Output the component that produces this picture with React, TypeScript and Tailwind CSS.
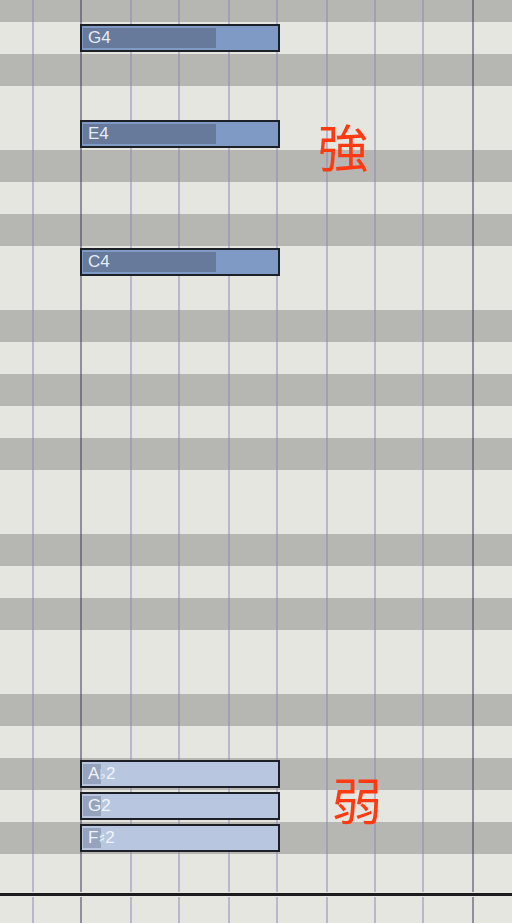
import React from 'react';

type Note = { label: string; accidental?: string; octave: string; strong: boolean };
type Row = { dark: boolean; h?: number; note?: Note };

// piano roll rows, top to bottom (first one is cut off by the viewport)
const rows: Row[] = [
  { dark: true, h: 22 },
  { dark: false, note: { label: 'G', octave: '4', strong: true } },
  { dark: true },
  { dark: false },
  { dark: false, note: { label: 'E', octave: '4', strong: true } },
  { dark: true },
  { dark: false },
  { dark: true },
  { dark: false, note: { label: 'C', octave: '4', strong: true } },
  { dark: false },
  { dark: true },
  { dark: false },
  { dark: true },
  { dark: false },
  { dark: true },
  { dark: false },
  { dark: false },
  { dark: true },
  { dark: false },
  { dark: true },
  { dark: false },
  { dark: false },
  { dark: true },
  { dark: false },
  { dark: true, note: { label: 'A', accidental: '♭', octave: '2', strong: false } },
  { dark: false, note: { label: 'G', octave: '2', strong: false } },
  { dark: true, note: { label: 'F', accidental: '♯', octave: '2', strong: false } },
  { dark: false },
];

// left edge of each beat line, bar lines are darker
const lines = [
  { x: 32, bar: false },
  { x: 80, bar: true },
  { x: 130, bar: false },
  { x: 178, bar: false },
  { x: 228, bar: false },
  { x: 276, bar: false },
  { x: 326, bar: false },
  { x: 374, bar: false },
  { x: 422, bar: false },
  { x: 472, bar: true },
];

const NoteBlock: React.FC<{ note: Note }> = ({ note }) => (
  <div
    className={`relative z-10 ml-[80px] mt-[2px] h-[28px] w-[200px] border-2 border-[#1d2027] px-[1px] py-[2px] ${
      note.strong ? 'bg-[#7f9bc5]' : 'bg-[#b8c6e0]'
    }`}
  >
    <div className="relative h-full">
      <div
        className={`absolute inset-y-0 left-0 ${
          note.strong ? 'w-[133px] bg-[#677a9b]' : 'w-[18px] bg-[#95a3bc]'
        }`}
      />
      <span
        className={`relative block pl-[5px] font-['Liberation_Sans',Arial,sans-serif] text-[17px] leading-[20px] ${
          note.strong ? 'text-[#e6ecf5]' : 'text-[#f0f4fa]'
        }`}
      >
        {note.label}
        {note.accidental && (
          <span className="font-['DejaVu_Sans',sans-serif] text-[14px] font-bold">{note.accidental}</span>
        )}
        {note.octave}
      </span>
    </div>
  </div>
);

export default function App() {
  return (
    <div className="relative h-[923px] w-[512px] overflow-hidden bg-[#e6e6e1]">
      {/* key rows */}
      <div className="flex flex-col">
        {rows.map((row, i) => (
          <div
            key={i}
            className={`${row.h === 22 ? 'h-[22px]' : 'h-[32px]'} ${row.dark ? 'bg-[#b6b7b2]' : 'bg-[#e6e6e1]'}`}
          >
            {row.note && <NoteBlock note={row.note} />}
          </div>
        ))}
        <div className="h-[6px] bg-[#e6e6e1]" />
        <div className="relative z-10 h-[5px] bg-[#e6e6e1] pt-[1px]">
          <div className="h-[2.5px] bg-[#1c1c1f]" />
        </div>
      </div>

      {/* beat grid */}
      <div className="pointer-events-none absolute inset-0">
        {lines.map((l) => (
          <div
            key={l.x}
            className={`absolute inset-y-0 w-[2px] ${l.bar ? 'bg-[#3c375a]/50' : 'bg-[#8d86b7]/50'}`}
            style={{ left: l.x }}
          />
        ))}
      </div>

      {/* annotations */}
      <span className="absolute left-[318px] top-[120px] z-20 font-['Noto_Sans_CJK_JP',sans-serif] text-[50px] leading-none text-[#ff3a12]">
        強
      </span>
      <span className="absolute left-[332px] top-[773px] z-20 font-['Noto_Sans_CJK_JP',sans-serif] text-[50px] leading-none text-[#ff3a12]">
        弱
      </span>
    </div>
  );
}
